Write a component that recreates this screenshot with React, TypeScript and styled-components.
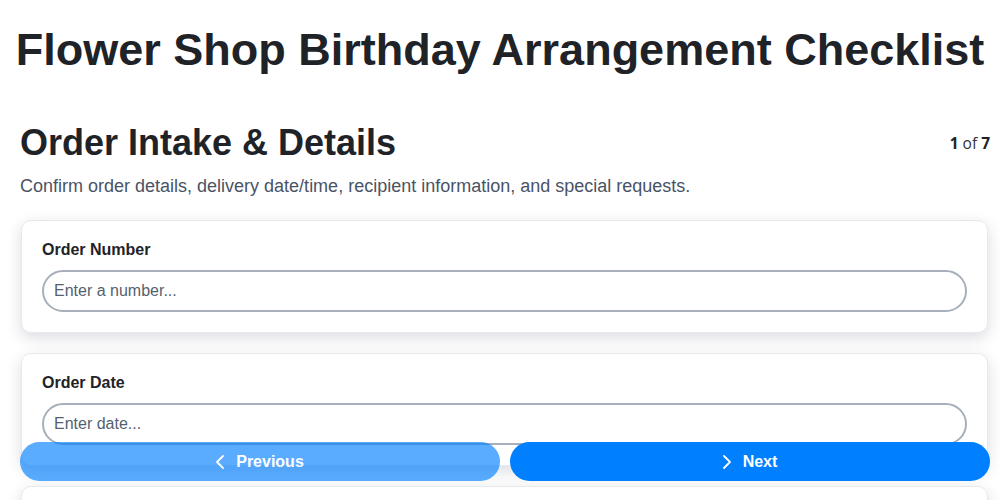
import { ChevronLeft, ChevronRight } from 'lucide-react';
import styled, { createGlobalStyle } from 'styled-components';

const GlobalStyle = createGlobalStyle`
  body {
    margin: 0;
    background: #fff;
    font-family: 'Liberation Sans', Arial, sans-serif;
    color: #1f2328;
  }
`;

const StyledTitle = styled.h1`
  margin: 24px 0 45px;
  font-size: 45px;
  line-height: 52px;
  font-weight: 700;
  text-align: center;
  color: #1f2328;
  white-space: nowrap;
`;
const StyledPage = styled.div`
  padding: 0 10px 120px 20px;
`;
const StyledStepHeader = styled.div`
  display: flex;
  justify-content: space-between;
  align-items: center;
`;
const StyledStepTitle = styled.h2`
  margin: 0;
  font-size: 36px;
  line-height: 44px;
  font-weight: 700;
  color: #1f2328;
`;
const StyledCounter = styled.div`
  font-family: 'Open Sans', 'Noto Sans', sans-serif;
  font-size: 15.5px;
  color: #333;
  b {
    color: #1f2328;
  }
`;
const StyledDescription = styled.p`
  margin: 10px 0 23px;
  font-size: 18px;
  line-height: 22px;
  color: #4a5366;
`;
const StyledFields = styled.div`
  display: flex;
  flex-direction: column;
  gap: 20px;
  margin: 0 2px 0 1px;
`;
const StyledCard = styled.div`
  background: #fff;
  border: 1px solid #e8e9ee;
  border-radius: 10px;
  box-shadow: 0 5px 15px rgba(30, 35, 60, 0.16);
  padding: 19px 20px 20px;
`;
const StyledLabel = styled.label`
  display: block;
  font-size: 16px;
  line-height: 19px;
  font-weight: 700;
  color: #1f2328;
  margin-bottom: 11px;
`;
const StyledInput = styled.input`
  box-sizing: border-box;
  width: 100%;
  height: 42px;
  border: 2px solid #a7b0ba;
  border-radius: 999px;
  padding: 0 10px;
  font-family: 'Liberation Sans', Arial, sans-serif;
  font-size: 16px;
  color: #1f2328;
  background: #fff;
  outline: none;
  &::placeholder {
    color: #555f70;
  }
`;
const StyledNav = styled.div`
  position: fixed;
  left: 20px;
  right: 10px;
  bottom: 19px;
  display: grid;
  grid-template-columns: 1fr 1fr;
  gap: 10px;
`;
const StyledNavButton = styled.button<{ $disabled?: boolean }>`
  height: 39px;
  border: none;
  border-radius: 999px;
  background: #0080ff;
  opacity: ${(p) => (p.$disabled ? 0.65 : 1)};
  color: #fff;
  font-family: 'Liberation Sans', Arial, sans-serif;
  font-size: 16px;
  font-weight: 700;
  display: flex;
  align-items: center;
  justify-content: center;
  gap: 4px;
  cursor: pointer;
  svg {
    margin-left: -8px;
  }
`;

const fields = [
  { label: 'Order Number', placeholder: 'Enter a number...' },
  { label: 'Order Date', placeholder: 'Enter date...' },
  { label: 'Delivery Date', placeholder: 'Enter date...' },
  { label: 'Delivery Time', placeholder: 'Enter text...' },
  { label: 'Recipient Name', placeholder: 'Enter text...' },
];

const App = () => {
  return (
    <>
      <GlobalStyle />
      <StyledTitle>Flower Shop Birthday Arrangement Checklist</StyledTitle>
      <StyledPage>
        <StyledStepHeader>
          <StyledStepTitle>Order Intake &amp; Details</StyledStepTitle>
          <StyledCounter>
            <b>1</b> of <b>7</b>
          </StyledCounter>
        </StyledStepHeader>
        <StyledDescription>
          Confirm order details, delivery date/time, recipient information, and special requests.
        </StyledDescription>
        <StyledFields>
          {fields.map((f) => (
            <StyledCard key={f.label}>
              <StyledLabel>{f.label}</StyledLabel>
              <StyledInput placeholder={f.placeholder} />
            </StyledCard>
          ))}
        </StyledFields>
      </StyledPage>
      <StyledNav>
        <StyledNavButton $disabled>
          <ChevronLeft size={24} strokeWidth={1.8} />
          Previous
        </StyledNavButton>
        <StyledNavButton>
          <ChevronRight size={24} strokeWidth={1.8} />
          Next
        </StyledNavButton>
      </StyledNav>
    </>
  );
};

export default App;
